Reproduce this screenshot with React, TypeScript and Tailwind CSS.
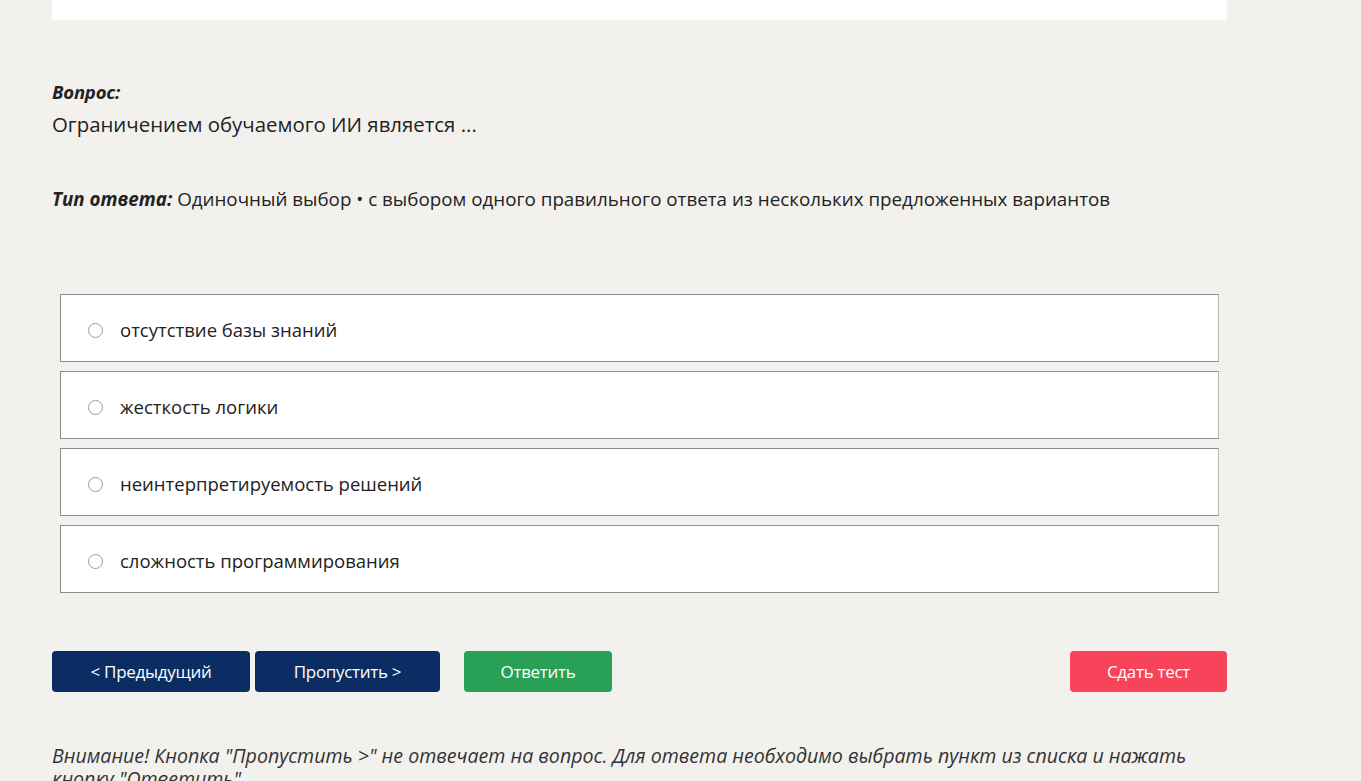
import { useState } from 'react';

const OPTIONS = [
    'отсутствие базы знаний',
    'жесткость логики',
    'неинтерпретируемость решений',
    'сложность программирования',
];

export default function App() {
    const [selected, setSelected] = useState<number | null>(null);

    return (
        <div
            className="min-h-[781px] w-full bg-[#f2f1ee] text-[#222222]"
            style={{ fontFamily: '"Open Sans", "Noto Sans", sans-serif' }}
        >
            <div className="w-[1175px] ml-[52px]">
                {/* top card edge */}
                <div className="h-[20px] bg-white" />

                {/* Question */}
                <div className="pt-[61px] text-[18.5px] leading-[22px] font-bold italic tracking-[-0.2px]">Вопрос:</div>
                <div className="mt-[8px] text-[20.4px] leading-[26px]">Ограничением обучаемого ИИ является ...</div>

                <div className="mt-[50px] text-[18.8px] leading-[24px]">
                    <span className="font-bold italic">Тип ответа:</span> Одиночный выбор • с выбором одного правильного ответа из нескольких предложенных вариантов
                </div>

                {/* Options */}
                <div className="mt-[83px] ml-[8px] w-[1159px] flex flex-col gap-[9px]">
                    {OPTIONS.map((option, i) => (
                        <label
                            key={option}
                            onClick={() => setSelected(i)}
                            className="h-[68px] pt-[4px] flex items-center bg-white border border-[#8c8c8c] border-r-[#b8b8b4] cursor-pointer"
                        >
                            <span
                                className={
                                    'ml-[27px] w-[15px] h-[15px] rounded-full border ' +
                                    (selected === i ? 'border-[#0a2d62] bg-[#0a2d62]' : 'border-[#9c9c9c] bg-white')
                                }
                            />
                            <span className="ml-[17px] text-[18.5px] leading-[24px]">{option}</span>
                        </label>
                    ))}
                </div>

                {/* Buttons */}
                <div className="mt-[58px] flex items-center">
                    <button className="h-[41px] w-[198px] rounded-[4px] bg-[#0b2d63] text-white text-[17px] tracking-[-0.3px]">
                        &lt; Предыдущий
                    </button>
                    <button className="ml-[5px] h-[41px] w-[185px] rounded-[4px] bg-[#0b2d63] text-white text-[17px] tracking-[-0.3px]">
                        Пропустить &gt;
                    </button>
                    <button className="ml-[24px] h-[41px] w-[148px] rounded-[4px] bg-[#28a157] text-white text-[17px] tracking-[-0.3px]">
                        Ответить
                    </button>
                    <div className="flex-1" />
                    <button className="h-[41px] w-[157px] rounded-[4px] bg-[#f7445a] text-white text-[17px] tracking-[-0.3px]">
                        Сдать тест
                    </button>
                </div>

                {/* Notice */}
                <p className="mt-[52px] text-[19.6px] leading-[23px] italic text-[#333333]">
                    Внимание! Кнопка "Пропустить &gt;" не отвечает на вопрос. Для ответа необходимо выбрать пункт из списка и нажать кнопку "Ответить".
                </p>
            </div>
        </div>
    );
}
